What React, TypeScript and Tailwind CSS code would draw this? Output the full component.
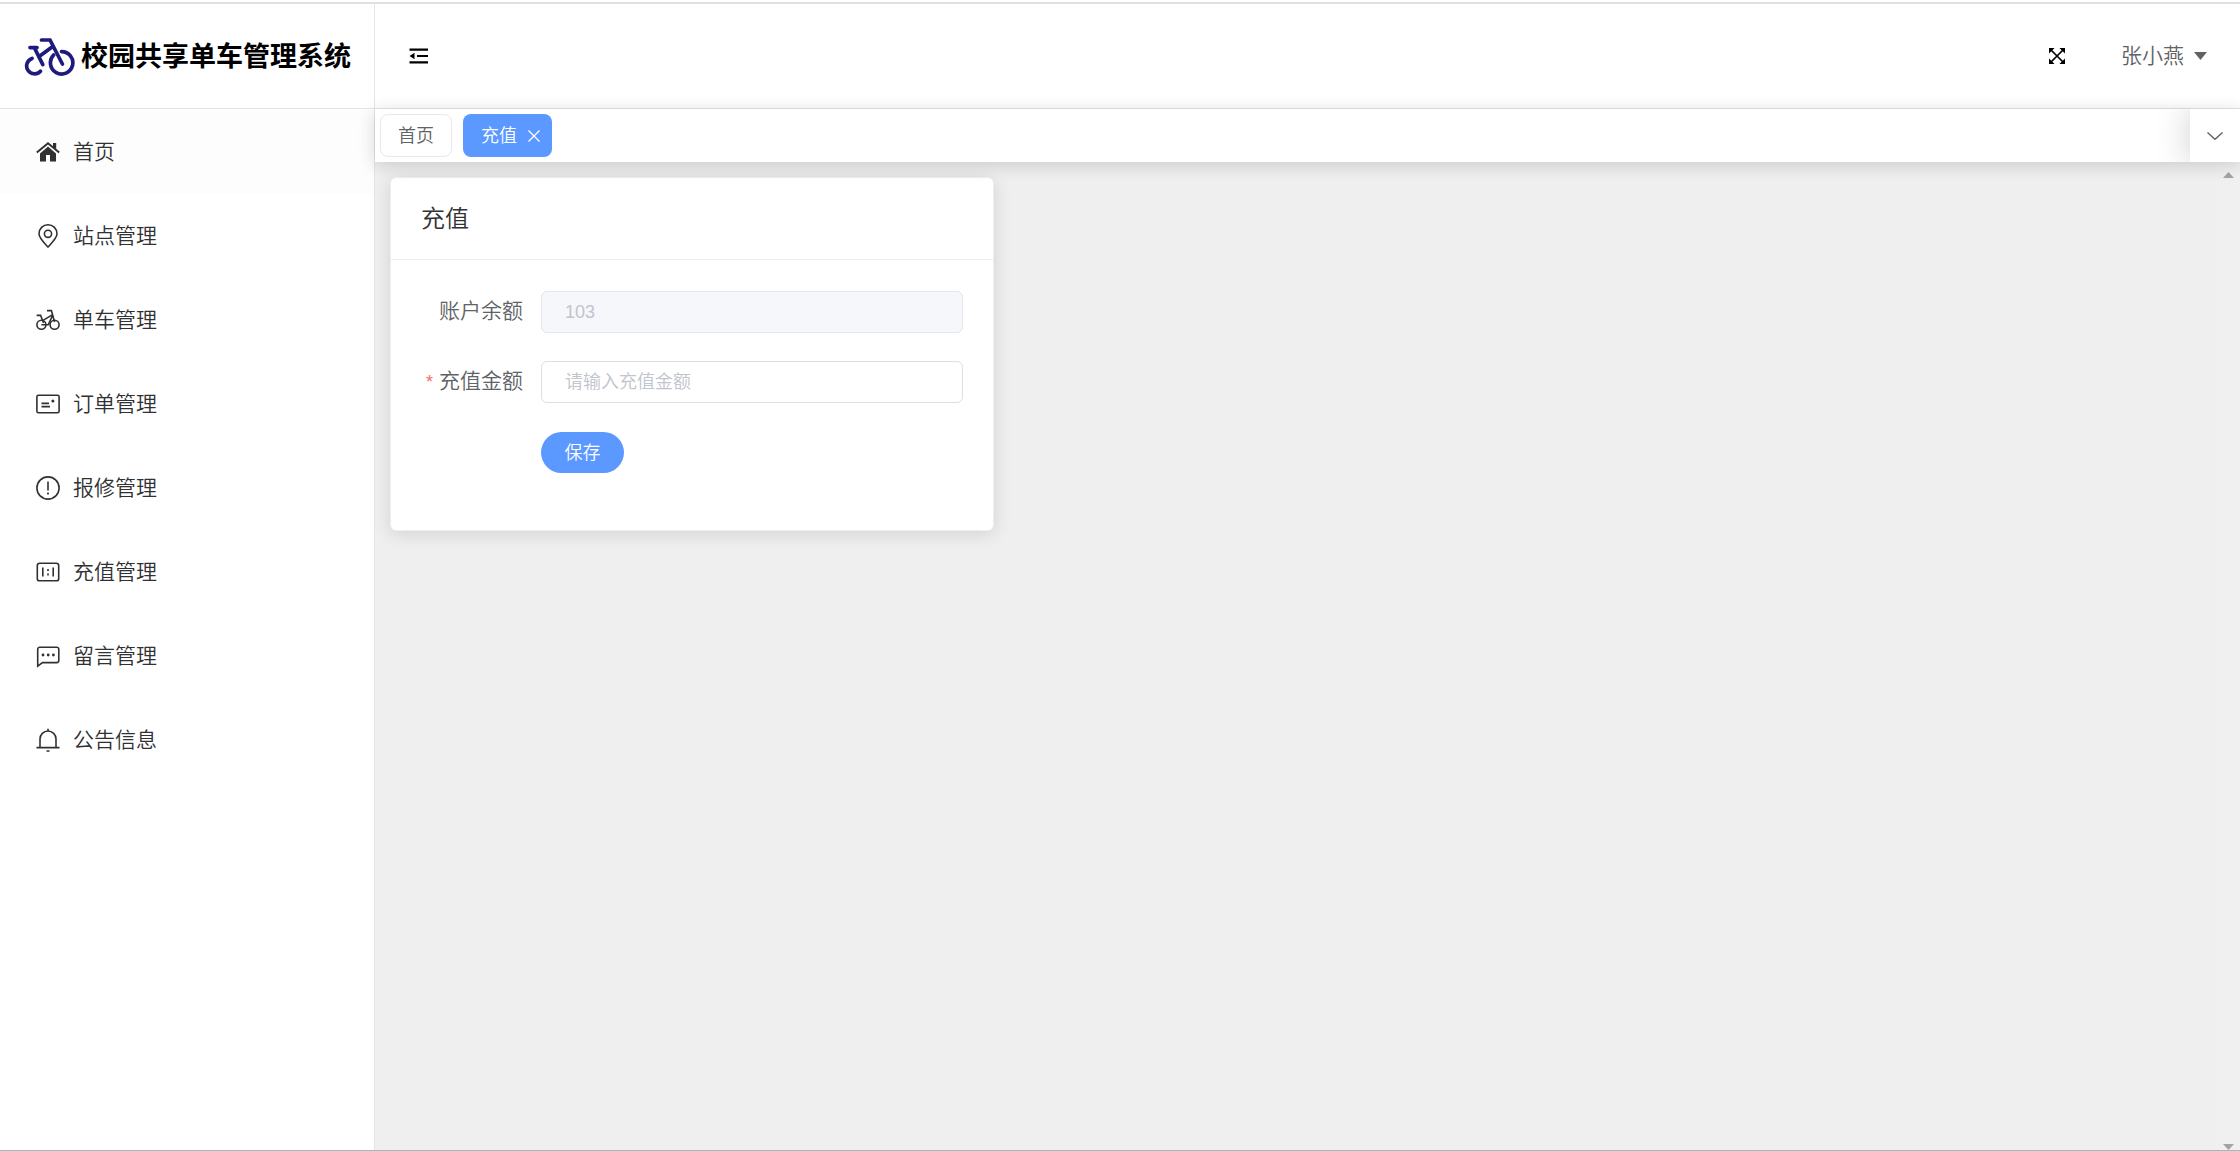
import {useState} from 'react'
import type {ReactNode} from 'react'

type IconProps = {
    children: ReactNode
}

const MenuIcon: React.FC<IconProps> = ({children}) => (
    <svg
        className="size-6 shrink-0"
        viewBox="0 0 24 24"
        fill="none"
        stroke="currentColor"
        strokeWidth="1.6"
        aria-hidden="true"
    >
        {children}
    </svg>
)

const menu = [
    {
        name: '首页',
        icon: (
            <>
                <path
                    d="M12 6.6 20 13.4V21.5H14V15H10V21.5H4V13.4Z"
                    fill="currentColor"
                    stroke="none"
                />
                <path d="M.8 12.6 12 3.2 23.2 12.6" strokeWidth="2" />
                <path d="M17 3H20.2V9.5L17 6.8Z" fill="currentColor" stroke="none" />
            </>
        ),
    },
    {
        name: '站点管理',
        icon: (
            <>
                <path d="M12 23C7 17.6 3 14 3 9.8a9 9 0 0 1 18 0C21 14 17 17.6 12 23Z" />
                <circle cx="12" cy="9.8" r="3.6" />
            </>
        ),
    },
    {
        name: '单车管理',
        icon: (
            <>
                <circle cx="5.4" cy="16.8" r="4.5" />
                <circle cx="18.6" cy="16.8" r="4.5" />
                <path d="M5.4 16.8H12.2L17 6.6M11 2.6H15.4L18.6 14M.6 7.4H4.6L7.6 15M6.6 12.6 16.6 6.6" />
            </>
        ),
    },
    {
        name: '订单管理',
        icon: (
            <>
                <rect x=".9" y="3.2" width="22.2" height="17.6" rx="1.6" />
                <path d="M5.5 11.4H13M5.5 14.6H14" />
                <circle cx="16.9" cy="9" r="1.5" fill="currentColor" stroke="none" />
            </>
        ),
    },
    {
        name: '报修管理',
        icon: (
            <>
                <circle cx="12" cy="12" r="11.1" />
                <path d="M12 5.5V14.5" />
                <circle cx="12" cy="17.5" r="1.1" fill="currentColor" stroke="none" />
            </>
        ),
    },
    {
        name: '充值管理',
        icon: (
            <>
                <rect x="1.3" y="3.2" width="21.4" height="17.6" rx="2.4" />
                <path d="M6.8 7.6V16.4M17.2 7.6V16.4M12 9V11M12 13.4V15.4" />
            </>
        ),
    },
    {
        name: '留言管理',
        icon: (
            <>
                <path d="M1.7 22.2V5.2A2 2 0 0 1 3.7 3.2H20.8A2 2 0 0 1 22.8 5.2V16.6A2 2 0 0 1 20.8 18.6H6.5Z" />
                <g fill="currentColor" stroke="none">
                    <circle cx="7" cy="11" r="1.4" />
                    <circle cx="12.2" cy="11" r="1.4" />
                    <circle cx="17.4" cy="11" r="1.4" />
                </g>
            </>
        ),
    },
    {
        name: '公告信息',
        icon: (
            <>
                <path d="M4 19.4V11a8 8 0 0 1 16 0V19.4M.5 19.6H23.5M12 .8V3M10.5 23H13.5" />
            </>
        ),
    },
]

const Logo = () => (
    <svg
        className="w-[51px] h-[39px] shrink-0"
        viewBox="0 0 51 39"
        fill="none"
        stroke="#1f1a7e"
        strokeWidth="3.7"
        strokeLinecap="round"
        aria-hidden="true"
    >
        <path d="M8 20.4A7.9 7.9 0 1 0 16.4 33.2" />
        <path d="M37.5 13.6A11.2 11.2 0 1 1 29.6 17" />
        <path d="M6 9.6H13M17.5 2H26L38.4 26M10.5 10 18.8 26.6M14.8 18.8 28.4 8.8" />
    </svg>
)

const Sidebar = () => (
    <aside className="flex flex-col w-[375px] shrink-0 bg-white border-r border-[#e4e4e4]">
        <div className="flex items-center h-[105px] gap-1.5 px-6 pt-0.5 border-b border-[#e4e4e4]">
            <Logo />
            <h1 className="text-[27px] font-bold text-black whitespace-nowrap">
                校园共享单车管理系统
            </h1>
        </div>
        <nav className="pt-px">
            {menu.map((item, index) => (
                <a
                    key={item.name}
                    href="#"
                    className={
                        index === 0
                            ? 'flex items-center h-[84px] gap-[13px] pl-9 bg-[#fdfdfd]'
                            : 'flex items-center h-[84px] gap-[13px] pl-9'
                    }
                >
                    <MenuIcon>{item.icon}</MenuIcon>
                    <span>{item.name}</span>
                </a>
            ))}
        </nav>
    </aside>
)

const Header = () => (
    <header className="flex items-center justify-between h-[105px] pl-8 pr-[33px] border-b border-[#e4e4e4] bg-white">
        <button type="button" aria-label="收起菜单" className="text-black">
            <svg className="size-6" viewBox="0 0 24 24" fill="currentColor">
                <path d="M2.5 4.5H21V6.7H2.5ZM10 10.9H21V13.1H10ZM2.5 17.3H21V19.5H2.5ZM2.5 12 7.5 8.8V15.2Z" />
            </svg>
        </button>
        <div className="flex items-center gap-14">
            <button type="button" aria-label="全屏" className="text-black">
                <svg
                    className="size-4"
                    viewBox="0 0 16 16"
                    fill="none"
                    stroke="currentColor"
                    strokeWidth="1.7"
                >
                    <path d="M2 2 14 14M14 2 2 14" />
                    <path
                        d="M0 0H5.6L0 5.6ZM16 0V5.6L10.4 0ZM0 16V10.4L5.6 16ZM16 16H10.4L16 10.4Z"
                        fill="currentColor"
                        stroke="none"
                    />
                </svg>
            </button>
            <button type="button" className="flex items-center gap-2.5 text-[#606266]">
                <span>张小燕</span>
                <svg className="w-[13px] h-2" viewBox="0 0 13 8" fill="currentColor">
                    <path d="M0 0H13L6.5 8Z" />
                </svg>
            </button>
        </div>
    </header>
)

const Tabs = () => (
    <div className="relative z-10 flex items-center justify-between h-[53px] bg-white shadow-[0_3px_18px_rgba(0,0,0,0.16)]">
        <div className="flex gap-[11px] pl-[5px] text-lg">
            <button
                type="button"
                className="h-[43px] px-[17px] border border-[#e8e8e8] rounded-lg text-[#606266]"
            >
                首页
            </button>
            <button
                type="button"
                className="flex items-center h-[43px] gap-[11px] pl-[18px] pr-3 rounded-lg bg-[#5b98ff] text-white"
            >
                充值
                <svg
                    className="size-3"
                    viewBox="0 0 12 12"
                    fill="none"
                    stroke="currentColor"
                    strokeWidth="1.3"
                >
                    <path d="M.5 .5 11.5 11.5M11.5 .5 .5 11.5" />
                </svg>
            </button>
        </div>
        <div className="self-stretch pl-9 overflow-hidden">
            <button
                type="button"
                aria-label="更多"
                className="flex items-center justify-center w-[50px] h-full bg-white text-[#606266] shadow-[0_0_36px_rgba(0,0,0,0.2)]"
            >
                <svg
                    className="w-4 h-2"
                    viewBox="0 0 16 8"
                    fill="none"
                    stroke="currentColor"
                    strokeWidth="1.4"
                >
                    <path d="M.5 .5 8 7.3 15.5 .5" />
                </svg>
            </button>
        </div>
    </div>
)

const RechargeCard = () => {
    const [amount, setAmount] = useState('')

    return (
        <section className="max-w-[604px] bg-white border border-[#ebeef5] rounded-md text-[#606266] shadow-[0_3px_18px_rgba(0,0,0,0.12)]">
            <h2 className="flex items-center h-[82px] px-[30px] border-b border-[#ebeef5] text-2xl text-[#303133]">
                充值
            </h2>
            <form
                className="flex flex-col px-[30px] pt-[31px] pb-[57px]"
                onSubmit={event => event.preventDefault()}
            >
                <div className="flex h-[42px] mb-7">
                    <label htmlFor="balance" className="w-[120px] pr-[18px] text-right leading-10">
                        账户余额
                    </label>
                    <input
                        id="balance"
                        disabled
                        value="103"
                        className="flex-1 min-w-0 h-full px-[23px] border border-[#e4e7ed] rounded-md bg-[#f5f7fa] text-lg text-[#c0c4cc]"
                    />
                </div>
                <div className="flex h-[42px] mb-7">
                    <label htmlFor="amount" className="w-[120px] pr-[18px] text-right leading-10">
                        <span className="mr-1.5 text-lg text-[#f56c6c]">*</span>
                        充值金额
                    </label>
                    <input
                        id="amount"
                        value={amount}
                        placeholder="请输入充值金额"
                        onChange={event => setAmount(event.target.value)}
                        className="flex-1 min-w-0 h-full px-[23px] border border-[#dcdfe6] rounded-md text-lg placeholder:text-[#c0c4cc]"
                    />
                </div>
                <button
                    type="submit"
                    className="self-start w-[83px] h-[41px] mt-px ml-[120px] rounded-full bg-[#5b98ff] text-lg text-white"
                >
                    保存
                </button>
            </form>
        </section>
    )
}

export default function App() {
    return (
        <div className="flex flex-col min-h-screen pt-0.5 bg-white border-b border-[#a0babd] font-['Liberation_Sans','Noto_Sans_CJK_SC',sans-serif] text-[21px] font-[350] text-[#303133]">
            <div className="h-0.5 bg-[#e0e0e0]" />
            <div className="flex flex-1">
                <Sidebar />
                <div className="flex flex-col flex-1 min-w-0">
                    <Header />
                    <Tabs />
                    <div className="flex flex-1 bg-[#efefef]">
                        <main className="flex-1 px-[15px] pt-[15px]">
                            <RechargeCard />
                        </main>
                        <div className="flex flex-col items-center justify-between w-6 pt-2.5 bg-[#f0f0f0] text-[#a3a3a3]">
                            <svg className="w-[11px] h-1.5" viewBox="0 0 11 6" fill="currentColor">
                                <path d="M0 6H11L5.5 0Z" />
                            </svg>
                            <svg className="w-[11px] h-1.5" viewBox="0 0 11 6" fill="currentColor">
                                <path d="M0 0H11L5.5 6Z" />
                            </svg>
                        </div>
                    </div>
                </div>
            </div>
        </div>
    )
}
